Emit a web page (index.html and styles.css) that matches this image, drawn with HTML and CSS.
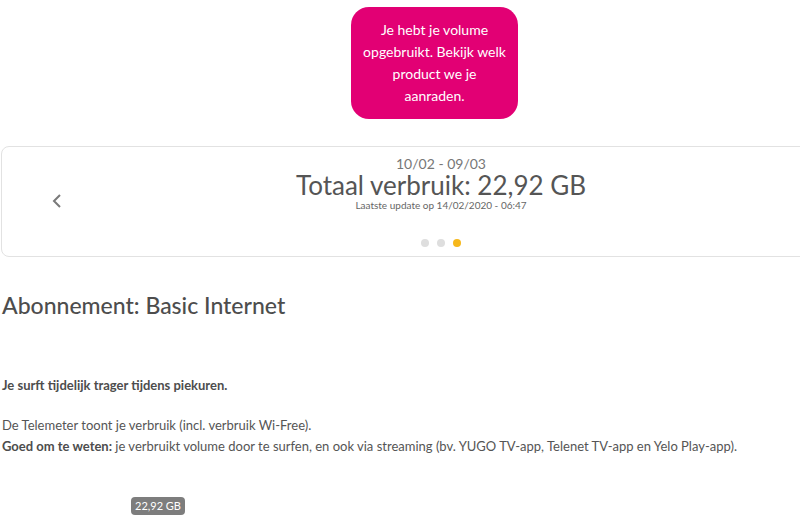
FILE: index.html
```html
<!DOCTYPE html>
<html lang="nl">

<head>
    <meta charset="UTF-8">
    <meta name="viewport" content="width=device-width, initial-scale=1.0">
    <title>Telemeter</title>
    <link rel="stylesheet" href="styles.css">
</head>

<body>
    <div class="bubbleRow">
        <div class="bubble">Je hebt je volume opgebruikt. Bekijk welk product we je aanraden.</div>
    </div>

    <div class="usageCard">
        <div class="arrowLeft">
            <svg width="12" height="16" viewBox="0 0 12 16"><path d="M9 2 L3 8 L9 14" fill="none" stroke="#7a7a7a" stroke-width="2"/></svg>
        </div>
        <div class="usageInfo">
            <div class="period">10/02 - 09/03</div>
            <div class="total">Totaal verbruik: 22,92 GB</div>
            <div class="updated">Laatste update op 14/02/2020 - 06:47</div>
            <div class="dots">
                <span class="dot"></span>
                <span class="dot"></span>
                <span class="dot active"></span>
            </div>
        </div>
    </div>

    <h2 class="plan">Abonnement: Basic Internet</h2>

    <p class="warn">Je surft tijdelijk trager tijdens piekuren.</p>

    <p class="info">De Telemeter toont je verbruik (incl. verbruik Wi-Free).<br>
        <b>Goed om te weten:</b> je verbruikt volume door te surfen, en ook via streaming (bv. YUGO TV-app, Telenet TV-app en Yelo Play-app).</p>

    <div class="chart">
        <span class="tip">22,92 GB</span>
    </div>
</body>

</html>
```

FILE: styles.css
```css
html {
    overflow: hidden;
}

body {
    margin: 0;
    padding: 0 0 0 2px;
    background: #fff;
    color: #555;
    font-family: Lato, "Open Sans", sans-serif;
}

.bubbleRow {
    display: flex;
    padding: 7px 0 0 349px;
}

.bubble {
    width: 167px;
    height: 112px;
    box-sizing: border-box;
    padding: 0 10px;
    background: #e20074;
    color: #fff;
    border-radius: 18px;
    font-size: 14px;
    line-height: 22px;
    text-align: center;
    display: flex;
    align-items: center;
    justify-content: center;
}

.usageCard {
    display: flex;
    width: 880px;
    height: 111px;
    box-sizing: border-box;
    margin: 27px 0 0 -1px;
    border: 1px solid #e2e2e2;
    border-radius: 8px;
    position: relative;
}

.arrowLeft {
    position: absolute;
    left: 49px;
    top: 46px;
}

.usageInfo {
    flex: 1;
    display: flex;
    flex-direction: column;
    align-items: center;
    padding-top: 8px;
}

.period {
    font-size: 14px;
    line-height: 17px;
    color: #777;
}

.total {
    font-size: 26px;
    line-height: 27px;
    color: #555;
}

.updated {
    font-size: 10px;
    line-height: 12px;
    color: #666;
}

.dots {
    display: flex;
    gap: 8px;
    margin-top: 28px;
}

.dot {
    width: 8px;
    height: 8px;
    border-radius: 50%;
    background: #dedede;
}

.dot.active {
    background: #f6b81c;
}

.plan {
    margin: 34px 0 0;
    font-size: 23px;
    font-weight: 500;
    color: #4d4d4d;
}

.warn {
    margin: 58px 0 0;
    font-size: 13px;
    font-weight: 700;
    color: #4d4d4d;
}

.info {
    margin: 22px 0 0;
    font-size: 13px;
    line-height: 21px;
    color: #555;
}

.info b {
    color: #4d4d4d;
}

.chart {
    padding: 37px 0 0 129px;
}

.tip {
    display: inline-block;
    position: relative;
    background: #7d7d7d;
    color: #fff;
    font-size: 11px;
    line-height: 18px;
    padding: 0 4px;
    border-radius: 4px;
}

.tip::after {
    content: '';
    position: absolute;
    left: 10px;
    bottom: -4px;
    border-left: 4px solid transparent;
    border-right: 4px solid transparent;
    border-top: 4px solid #7d7d7d;
}
```
